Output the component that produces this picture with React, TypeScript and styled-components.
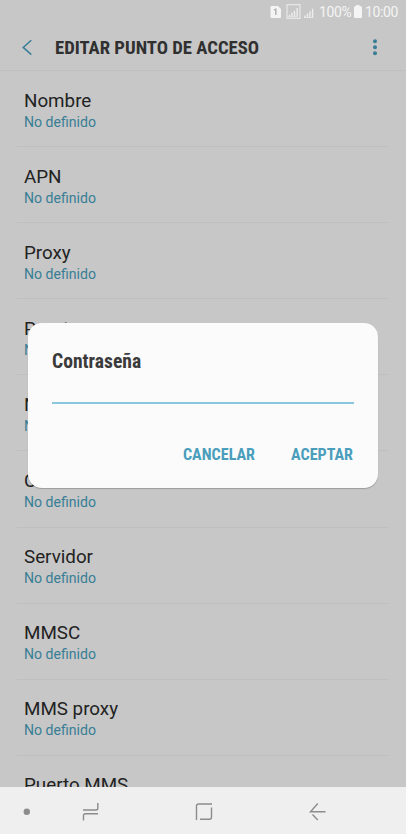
import React from 'react';
import styled, { createGlobalStyle } from 'styled-components';

const GlobalStyle = createGlobalStyle`
  * { box-sizing: border-box; }
  body { margin: 0; background: #c7c7c7; font-family: Roboto, sans-serif; }
`;

const Screen = styled.div`
  position: relative;
  width: 406px;
  height: 834px;
  overflow: hidden;
  display: flex;
  flex-direction: column;
  background: #c7c7c7;
`;

const StatusBar = styled.div`
  height: 25px;
  flex: none;
  display: flex;
  align-items: center;
  justify-content: flex-end;
  padding-right: 8px;
  color: #f4f4f4;
`;

const StatusText = styled.span<{ $width: number }>`
  width: ${(p) => p.$width}px;
  font-size: 14px;
  line-height: 25px;
  white-space: nowrap;
  letter-spacing: -0.4px;
`;

const Header = styled.header`
  height: 46px;
  flex: none;
  display: flex;
  align-items: center;
  padding: 0 25px 0 20px;
  border-bottom: 1px solid #bfbfbf;
`;

const Condensed = styled.span<{ $size: number; $color: string }>`
  display: block;
  font-stretch: 75%;
  font-family: 'Roboto Condensed', Roboto, sans-serif;
  font-weight: 700;
  font-size: ${(p) => p.$size}px;
  line-height: 24px;
  color: ${(p) => p.$color};
  white-space: nowrap;
`;

const Title = styled.h1`
  flex: 1;
  margin: 1px 0 0 20px;
`;

const List = styled.main`
  flex: 1;
  min-height: 0;
  overflow: hidden;
  padding: 0 17px;
`;

const Row = styled.div`
  height: 76.1px;
  padding: 17.55px 7px 0;
  border-bottom: 1px solid #bfbfbf;
`;

const Label = styled.div`
  font-size: 18.8px;
  line-height: 24px;
  color: #222;
`;

const Value = styled.div`
  font-size: 14.1px;
  line-height: 19px;
  color: #397e96;
`;

const NavBar = styled.nav`
  height: 47px;
  flex: none;
  background: #efefef;
`;

const Dialog = styled.section`
  position: absolute;
  left: 28px;
  top: 323px;
  width: 350px;
  height: 164.5px;
  border-radius: 14px;
  padding: 27px 24px 0;
  background: #fbfbfb;
  box-shadow: 0 1px 1px rgba(0, 0, 0, 0.22);
`;

const Field = styled.div`
  height: 30px;
  border-bottom: 2px solid #8ac7df;
`;

const Actions = styled.div`
  display: flex;
  justify-content: flex-end;
  gap: 36px;
  margin-top: 39px;
  padding-right: 1px;
`;

const Button = styled.button`
  border: 0;
  padding: 0;
  background: none;
`;

const rows = ['Nombre', 'APN', 'Proxy', 'Puerto', 'Nombre de usuario', 'Contraseña', 'Servidor', 'MMSC', 'MMS proxy', 'Puerto MMS'];

const StatusIcons = () => (
  <svg width="50" height="25" viewBox="269 0 50 25">
    <path d="M270.5 7q0-1 1-1h6.5l3 3v8q0 1-1 1h-8.5q-1 0-1-1z" fill="#f4f4f4" />
    <path d="M274 10.2l1.8-1V15" fill="none" stroke="#b4b4b4" strokeWidth="1.5" />
    <rect x="287" y="4.7" width="13" height="13.6" fill="none" stroke="#eee" />
    <path d="M289.5 16.8v-2M292 16.8v-4M294.5 16.8v-6M297.2 16.8V8M305 17.5v-2M307.5 17.5v-4M310 17.5v-6.2M312.6 17.5V8.8" stroke="#eee" strokeWidth="1.4" />
    <path d="M288 16.8h9.5M304 17.5h9" stroke="#eee" strokeWidth=".7" />
  </svg>
);

const Battery = () => (
  <svg width="13" height="25" viewBox="0 0 13 25">
    <path d="M4 5h3.5v1.3H9q1 0 1 1V17q0 1-1 1H3q-1 0-1-1V7.3q0-1 1-1h1z" fill="#f4f4f4" />
  </svg>
);

export default function App() {
  return (
    <>
      <GlobalStyle />
      <Screen>
        <StatusBar>
          <StatusIcons />
          <StatusText $width={33}>100%</StatusText>
          <Battery />
          <StatusText $width={33}>10:00</StatusText>
        </StatusBar>
        <Header>
          <svg width="15" height="20" viewBox="20 38 15 20">
            <path d="M31.3 40.2L23.2 47.4l8.1 7.2" fill="none" stroke="#397e96" strokeWidth="1.5" />
          </svg>
          <Title><Condensed $size={18.7} $color="#303030">EDITAR PUNTO DE ACCESO</Condensed></Title>
          <svg width="12" height="20" viewBox="0 0 12 20" fill="#397e96">
            <circle cx="6" cy="3.3" r="2" /><circle cx="6" cy="9.3" r="2" /><circle cx="6" cy="15.3" r="2" />
          </svg>
        </Header>
        <List>
          {rows.map((name) => (
            <Row key={name}>
              <Label>{name}</Label>
              <Value>No definido</Value>
            </Row>
          ))}
        </List>
        <NavBar>
          <svg width="406" height="47" viewBox="0 787 406 47" fill="none" stroke="#8c8c8c" strokeWidth="1.4">
            <circle cx="26.8" cy="811.7" r="3.2" fill="#8c8c8c" stroke="none" />
            <path d="M83 810h13q1.8 0 1.8-1.8V803M98 813.7H85.3q-1.8 0-1.8 1.8V820.5" />
            <path d="M212 804H198.5q-2 0-2 2V820M200 819.3h9.5q2 0 2-2V807.5" />
            <path d="M325.5 811.7H310.5l7.3-8.2M312.5 814.5l5.3 5.4" />
          </svg>
        </NavBar>
        <Dialog>
          <Condensed $size={19.6} $color="#3a3a3a">Contraseña</Condensed>
          <Field />
          <Actions>
            <Button><Condensed $size={16.1} $color="#4a9ebb">CANCELAR</Condensed></Button>
            <Button><Condensed $size={16.1} $color="#4a9ebb">ACEPTAR</Condensed></Button>
          </Actions>
        </Dialog>
      </Screen>
    </>
  );
}
